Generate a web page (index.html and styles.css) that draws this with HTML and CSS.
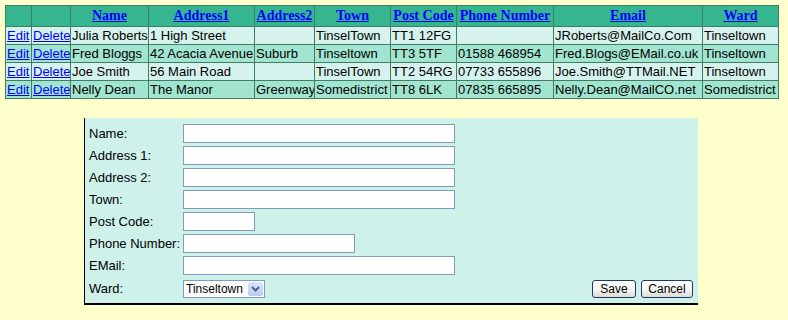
FILE: index.html
```html
<!DOCTYPE html>
<html lang="en">
<head>
    <meta charset="UTF-8">
    <title>Contacts</title>
    <link rel="stylesheet" href="styles.css">
</head>
<body>

    <table class="grid">
        <colgroup>
            <col class="c-edit"><col class="c-del"><col class="c-name"><col class="c-addr1"><col class="c-addr2">
            <col class="c-town"><col class="c-post"><col class="c-phone"><col class="c-email"><col class="c-ward">
        </colgroup>
        <tr class="head">
            <th></th>
            <th></th>
            <th><a href="#">Name</a></th>
            <th><a href="#">Address1</a></th>
            <th><a href="#">Address2</a></th>
            <th><a href="#">Town</a></th>
            <th><a href="#">Post Code</a></th>
            <th><a href="#">Phone Number</a></th>
            <th><a href="#">Email</a></th>
            <th><a href="#">Ward</a></th>
        </tr>
        <tr class="row">
            <td><a href="#">Edit</a></td><td><a href="#">Delete</a></td>
            <td>Julia Roberts</td><td>1 High Street</td><td></td><td>TinselTown</td>
            <td>TT1 12FG</td><td></td><td>JRoberts@MailCo.Com</td><td>Tinseltown</td>
        </tr>
        <tr class="alt">
            <td><a href="#">Edit</a></td><td><a href="#">Delete</a></td>
            <td>Fred Bloggs</td><td>42 Acacia Avenue</td><td>Suburb</td><td>Tinseltown</td>
            <td>TT3 5TF</td><td>01588 468954</td><td>Fred.Blogs@EMail.co.uk</td><td>Tinseltown</td>
        </tr>
        <tr class="row">
            <td><a href="#">Edit</a></td><td><a href="#">Delete</a></td>
            <td>Joe Smith</td><td>56 Main Road</td><td></td><td>TinselTown</td>
            <td>TT2 54RG</td><td>07733 655896</td><td>Joe.Smith@TTMail.NET</td><td>Tinseltown</td>
        </tr>
        <tr class="alt">
            <td><a href="#">Edit</a></td><td><a href="#">Delete</a></td>
            <td>Nelly Dean</td><td>The Manor</td><td>Greenway</td><td>Somedistrict</td>
            <td>TT8 6LK</td><td>07835 665895</td><td>Nelly.Dean@MailCO.net</td><td>Somedistrict</td>
        </tr>
    </table>

    <form class="panel">
        <label for="name">Name:</label>
        <input type="text" id="name" class="wide">
        <label for="addr1">Address 1:</label>
        <input type="text" id="addr1" class="wide">
        <label for="addr2">Address 2:</label>
        <input type="text" id="addr2" class="wide">
        <label for="town">Town:</label>
        <input type="text" id="town" class="wide">
        <label for="post">Post Code:</label>
        <input type="text" id="post" class="short">
        <label for="phone">Phone Number:</label>
        <input type="text" id="phone" class="mid">
        <label for="email">EMail:</label>
        <input type="text" id="email" class="wide">
        <label for="ward">Ward:</label>
        <div class="last">
            <span class="select-box">
                <select id="ward">
                    <option>Tinseltown</option>
                    <option>Somedistrict</option>
                </select>
                <span class="arrow">
                    <svg width="15" height="14" viewBox="0 0 15 14"><path d="M4 5 L7.5 8.5 L11 5" fill="none" stroke="#4d6185" stroke-width="2"/></svg>
                </span>
            </span>
            <span class="buttons">
                <button type="submit" class="btn save">Save</button>
                <button type="button" class="btn cancel">Cancel</button>
            </span>
        </div>
    </form>

</body>
</html>
```

FILE: styles.css
```css
body {
    background-color: #ffffcc;
    font-family: "Liberation Sans", Arial, sans-serif;
    font-size: 13px;
    margin: 5px;
}
a {
    color: #0000ff;
}

/* contacts grid */
.grid {
    border-collapse: collapse;
    table-layout: fixed;
    width: 773px;
    border: 1px solid #285f48;
}
.c-edit { width: 26px; }
.c-del { width: 39px; }
.c-name { width: 78px; }
.c-addr1 { width: 106px; }
.c-addr2 { width: 60px; }
.c-town { width: 76px; }
.c-post { width: 66px; }
.c-phone { width: 97px; }
.c-email { width: 149px; }
.c-ward { width: 76px; }
.grid th,
.grid td {
    border: 1px solid #3f7d66;
    overflow: hidden;
    white-space: nowrap;
    padding: 0 0 0 1px;
}
.grid th {
    font-family: "Liberation Serif", "Times New Roman", serif;
    font-size: 14px;
    font-weight: bold;
    height: 20px;
    padding: 0;
}
.head {
    background-color: #36b68e;
}
.grid td {
    height: 17px;
    line-height: 15px;
    color: #000;
}
.row {
    background-color: #d5f3ec;
}
.alt {
    background-color: #a1e4d0;
}

/* edit panel */
.panel {
    display: grid;
    grid-template-columns: 94px 1fr;
    row-gap: 3px;
    align-items: center;
    width: 604px;
    margin: 19px 0 0 79px;
    padding: 6px 5px 5px 4px;
    background-color: #cef1ea;
    border-left: 1px solid #000;
    border-bottom: 2px solid #000;
}
.panel label {
    font-size: 13px;
    color: #000;
    line-height: 19px;
}
.panel input {
    box-sizing: border-box;
    height: 19px;
    margin: 0;
    border: 1px solid #7f9db9;
    background: #fff;
    font-size: 12px;
    padding: 1px 2px;
}
.wide { width: 272px; }
.mid { width: 172px; }
.short { width: 72px; }
.last {
    display: flex;
    justify-content: space-between;
    align-items: center;
    margin-top: 2px;
}
.select-box {
    position: relative;
    display: inline-block;
    width: 82px;
    height: 18px;
}
.select-box select {
    appearance: none;
    box-sizing: border-box;
    width: 82px;
    height: 18px;
    margin: 0;
    border: 1px solid #7f9db9;
    background: #fff;
    font-family: "Liberation Sans", Arial, sans-serif;
    font-size: 12px;
    padding: 0 0 0 2px;
    border-radius: 0;
}
.arrow {
    position: absolute;
    right: 2px;
    top: 2px;
    width: 15px;
    height: 14px;
    background: linear-gradient(#dbe6fc, #b9cbf3);
    border-radius: 2px;
    pointer-events: none;
}
.arrow svg {
    display: block;
}
.buttons {
    display: flex;
    gap: 5px;
}
.btn {
    box-sizing: border-box;
    height: 18px;
    padding: 0;
    border: 1px solid #1c3b6b;
    border-radius: 3px;
    background: linear-gradient(#ffffff, #f3f3ef 60%, #dcdcd3);
    font-family: "Liberation Sans", Arial, sans-serif;
    font-size: 12px;
    color: #000;
}
.save { width: 44px; }
.cancel { width: 52px; }
```
